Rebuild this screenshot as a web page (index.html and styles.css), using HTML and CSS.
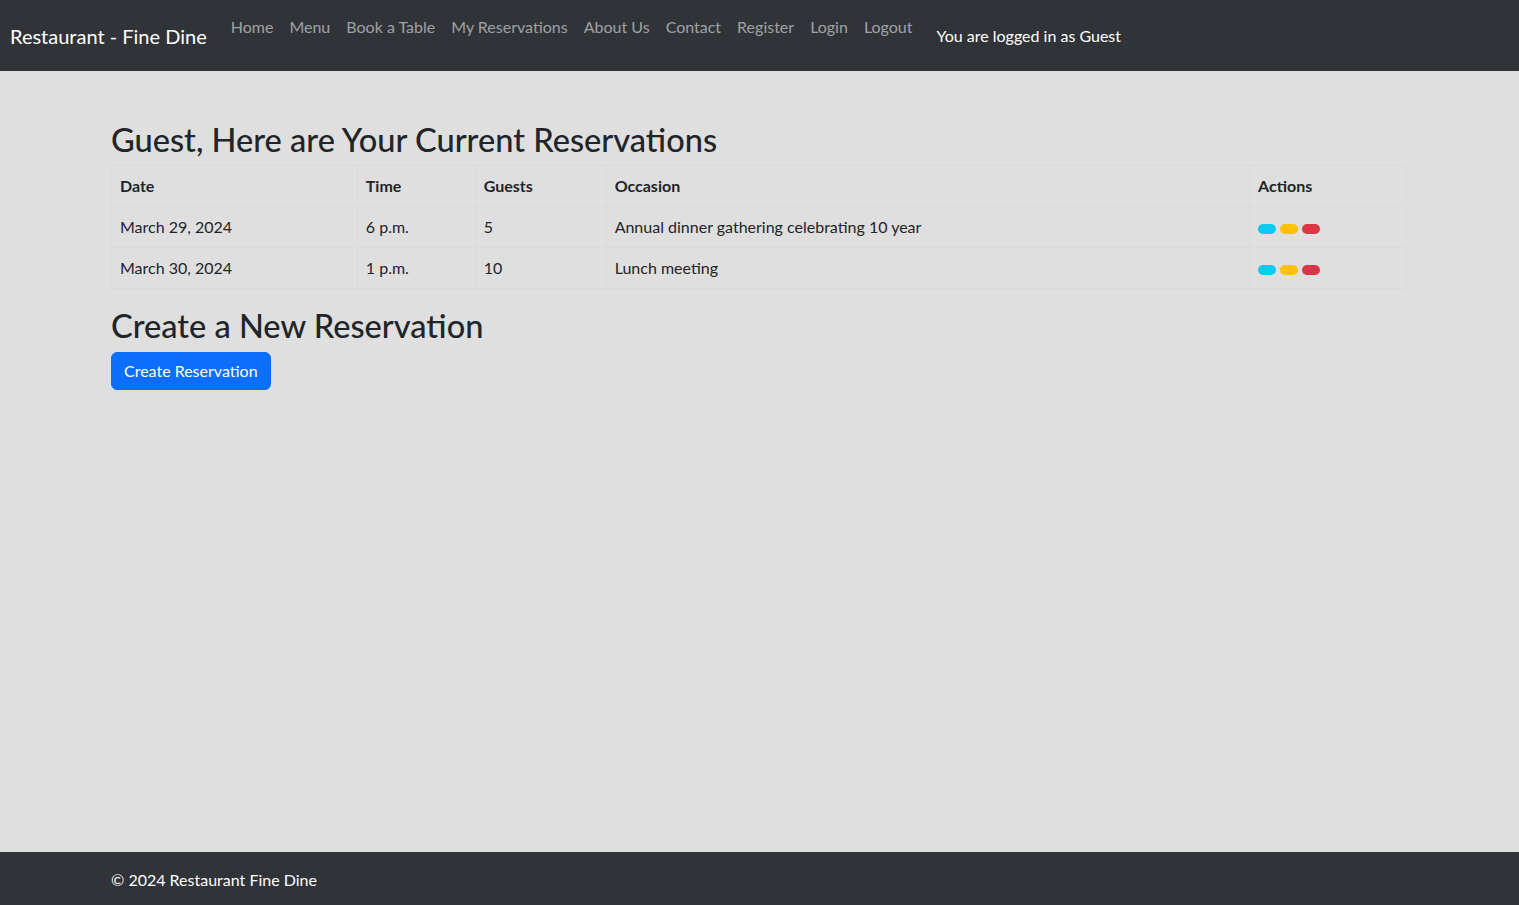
FILE: index.html
```html
<!DOCTYPE html>
<html lang="en">
<head>
<meta charset="utf-8">
<title>Restaurant - Fine Dine</title>
<link rel="stylesheet" href="styles.css">
</head>
<body>
<div class="page">
  <nav class="navbar">
    <a class="brand" href="#">Restaurant - Fine Dine</a>
    <ul class="nav-links">
      <li><a href="#">Home</a></li>
      <li><a href="#">Menu</a></li>
      <li><a href="#">Book a Table</a></li>
      <li><a href="#">My Reservations</a></li>
      <li><a href="#">About Us</a></li>
      <li><a href="#">Contact</a></li>
      <li><a href="#">Register</a></li>
      <li><a href="#">Login</a></li>
      <li><a href="#">Logout</a></li>
    </ul>
    <span class="user-status">You are logged in as Guest</span>
  </nav>

  <main class="container">
    <h2 class="title">Guest, Here are Your Current Reservations</h2>
    <table class="res-table">
      <colgroup>
        <col class="c-date"><col class="c-time"><col class="c-guests"><col class="c-occ"><col class="c-act">
      </colgroup>
      <thead>
        <tr><th>Date</th><th>Time</th><th>Guests</th><th>Occasion</th><th>Actions</th></tr>
      </thead>
      <tbody>
        <tr>
          <td>March 29, 2024</td><td>6 p.m.</td><td>5</td><td>Annual dinner gathering celebrating 10 year</td>
          <td><div class="actions"><span class="pill info"></span><span class="pill warn"></span><span class="pill danger"></span></div></td>
        </tr>
        <tr>
          <td>March 30, 2024</td><td>1 p.m.</td><td>10</td><td>Lunch meeting</td>
          <td><div class="actions"><span class="pill info"></span><span class="pill warn"></span><span class="pill danger"></span></div></td>
        </tr>
      </tbody>
    </table>
    <h2 class="title">Create a New Reservation</h2>
    <a class="btn-primary" href="#">Create Reservation</a>
  </main>

  <footer class="footer">
    <div class="footer-inner">© 2024 Restaurant Fine Dine</div>
  </footer>
</div>
</body>
</html>
```

FILE: styles.css
```css
* { box-sizing: border-box; }
html, body { margin: 0; padding: 0; }
body {
  font-family: "Lato", "Noto Sans", sans-serif;
  font-size: 16px;
  line-height: 1.5;
  color: #212529;
  background: #dfdfdf;
}
a { text-decoration: none; }
.page {
  min-height: 905px;
  display: flex;
  flex-direction: column;
}
.navbar {
  height: 71px;
  background: #303338;
  display: flex;
  align-items: center;
  padding: 0 10px;
}
.brand {
  color: #fff;
  font-size: 20px;
  line-height: 30px;
  margin-right: 16px;
}
.nav-links {
  list-style: none;
  margin: 0;
  padding: 0;
  display: flex;
  align-self: flex-start;
  margin-top: 15px;
}
.nav-links a {
  display: block;
  padding: 0 8px;
  line-height: 24px;
  color: rgba(255,255,255,0.55);
}
.user-status {
  color: #fff;
  margin-left: 16px;
  line-height: 24px;
}
.container {
  flex: 1;
  width: 1320px;
  margin: 0 auto;
  padding: 48px 12.5px 0 11.5px;
}
.title {
  font-size: 32.6px;
  font-weight: 500;
  line-height: 38.4px;
  margin: 0 0 6px;
  padding-top: 2px;
}
.res-table {
  width: 1296px;
  border-collapse: collapse;
  margin-bottom: 16px;
}
.c-date { width: 246px; }
.c-time { width: 118px; }
.c-guests { width: 131px; }
.c-occ { width: 644px; }
.c-act { width: 157px; }
.res-table th, .res-table td {
  border: 1px solid #d8dadd;
  padding: 8px;
  text-align: left;
  vertical-align: top;
  line-height: 24px;
}
.res-table th { font-weight: 700; }
.actions {
  display: flex;
  gap: 4px;
  height: 24px;
  padding-top: 4px;
  align-items: center;
}
.pill {
  display: block;
  width: 18px;
  height: 10px;
  border-radius: 5px;
}
.info { background: #0dcaf0; }
.warn { background: #ffc107; }
.danger { background: #dc3545; }
.btn-primary {
  display: inline-block;
  background: #0d6efd;
  color: #fff;
  border: 1px solid #0d6efd;
  border-radius: 6px;
  padding: 6px 12px;
  line-height: 24px;
}
.footer {
  background: #303338;
  height: 53px;
}
.footer-inner {
  width: 1320px;
  margin: 0 auto;
  padding: 16px 12.5px 0 11.5px;
  color: #fff;
  line-height: 24px;
}
```
